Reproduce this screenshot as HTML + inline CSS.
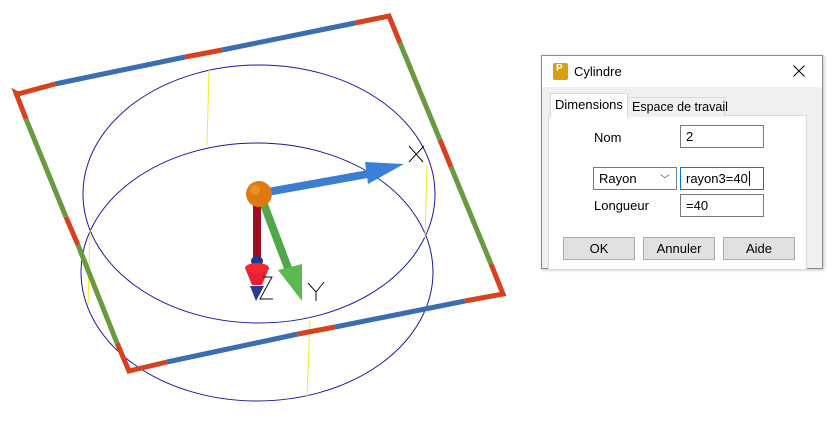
<!DOCTYPE html>
<html><head><meta charset="utf-8"><style>
html,body{margin:0;padding:0;width:829px;height:422px;background:#fff;overflow:hidden;font-family:"Liberation Sans",sans-serif;}
.dlg{position:absolute;left:541px;top:55px;width:280px;height:212px;border:1px solid #8a8a8a;background:#f0f0f0;box-shadow:1px 1px 3px rgba(0,0,0,.25);}
.tb{position:absolute;left:0;top:0;width:280px;height:31px;background:#fff;}
.t{position:absolute;font-size:13px;color:#000;}
.inp{position:absolute;background:#fff;border:1px solid #7a7a7a;height:23px;box-sizing:border-box;font-size:13px;padding:3px 5px;}
.btn{position:absolute;top:181px;width:72px;height:23px;border:1px solid #adadad;background:#e1e1e1;box-sizing:border-box;font-size:13px;text-align:center;line-height:21px;}
</style></head><body>
<svg width="829" height="422" style="position:absolute;left:0;top:0">
<g fill="none" stroke="#1a1aa0" stroke-width="1">
<ellipse cx="259" cy="194" rx="176" ry="129"/>
<ellipse cx="257" cy="272" rx="176" ry="129"/>
</g>
<g stroke="#f0f020" stroke-width="1">
<line x1="209" y1="70" x2="207" y2="145"/><line x1="427" y1="165" x2="425" y2="238"/>
<line x1="310" y1="320" x2="307" y2="398"/><line x1="90" y1="230" x2="88" y2="305"/>
</g>
<g stroke-width="5" stroke-linecap="butt" fill="none">
<polyline stroke="#d8401e" points="18,94 55,84"/>
<line stroke="#3a6eb0" x1="55" y1="84" x2="185" y2="57"/>
<line stroke="#d8401e" x1="185" y1="57" x2="222" y2="50"/>
<line stroke="#3a6eb0" x1="222" y1="50" x2="355" y2="23"/>
<polyline stroke="#d8401e" points="355,23 389,16 400,43"/>
<line stroke="#6a9a40" x1="400" y1="43" x2="440" y2="140"/>
<line stroke="#d8401e" x1="440" y1="140" x2="451" y2="167"/>
<line stroke="#6a9a40" x1="451" y1="167" x2="491" y2="264"/>
<polyline stroke="#d8401e" points="491,264 503,294 465,301"/>
<line stroke="#3a6eb0" x1="465" y1="301" x2="335" y2="327"/>
<line stroke="#d8401e" x1="335" y1="327" x2="298" y2="334"/>
<line stroke="#3a6eb0" x1="298" y1="334" x2="167" y2="362"/>
<polyline stroke="#d8401e" points="167,362 129,371 117,343"/>
<line stroke="#6a9a40" x1="117" y1="343" x2="78" y2="245"/>
<line stroke="#d8401e" x1="78" y1="245" x2="66" y2="217"/>
<line stroke="#6a9a40" x1="66" y1="217" x2="26" y2="119"/>
<polyline stroke="#d8401e" points="26,119 16,93 18,94"/>
</g>
<line x1="262" y1="193" x2="368" y2="174" stroke="#3a7ed0" stroke-width="8"/>
<polygon points="365,162 404,164 368,184" fill="#3a80d8"/>
<line x1="257" y1="200" x2="257" y2="260" stroke="#9a1020" stroke-width="8"/>
<ellipse cx="257" cy="261" rx="6" ry="5" fill="#203a8a"/>
<polygon points="245,268 269,268 262,285 252,285" fill="#e82030"/>
<ellipse cx="257" cy="268" rx="12" ry="5" fill="#f02838"/>
<polygon points="250,286 264,286 256,301" fill="#2a3a90"/>
<line x1="263" y1="202" x2="288" y2="268" stroke="#50a848" stroke-width="8"/>
<polygon points="278,270 302,264 302,301" fill="#5cb850"/>
<circle cx="259" cy="194" r="13" fill="#e07a10"/>
<circle cx="255" cy="190" r="5" fill="#f0a040" opacity=".6"/>
<g stroke="#111" stroke-width="1" fill="none">
<path d="M409 146 L423 162 M424 146 L409 162"/>
<path d="M308 283 L316 292 L324 282 M316 292 L316 301"/>
<path d="M263 277 L272 277 L260 299 L273 299"/>
</g>
</svg>
<div class="dlg">
<div class="tb">
<div style="position:absolute;left:11px;top:7px;width:15px;height:17px;background:#d8a010;border-radius:2px;"></div>
<div style="position:absolute;left:14px;top:7px;font-size:10px;font-weight:bold;color:#fff">P</div>
<div class="t" style="left:32px;top:8px;font-size:13px">Cylindre</div>
<svg style="position:absolute;left:251px;top:9px" width="12" height="12"><path d="M0.5 0.5 L11.5 11.5 M11.5 0.5 L0.5 11.5" stroke="#000" stroke-width="1"/></svg>
</div>
<div style="position:absolute;left:6px;top:59px;width:257px;height:153px;background:#fff;border:1px solid #d9d9d9;border-bottom:none"></div>
<div style="position:absolute;left:8px;top:37px;width:76px;height:24px;background:#fff;border:1px solid #d9d9d9;border-bottom:none"></div>
<div class="t" style="left:13px;top:41px">Dimensions</div>
<div style="position:absolute;left:85px;top:41px;width:96px;height:19px;background:#f0f0f0;border:1px solid #d9d9d9;border-bottom:none"></div>
<div class="t" style="left:90px;top:44px;font-size:12.5px">Espace de travail</div>
<div class="t" style="left:52px;top:74px">Nom</div>
<div class="inp" style="left:138px;top:69px;width:84px">2</div>
<div class="inp" style="left:51px;top:111px;width:84px">Rayon<span style="position:absolute;right:6px;top:3px;font-size:10px;color:#555">﹀</span></div>
<div class="inp" style="left:138px;top:111px;width:84px;border-color:#0078d7">rayon3=40<span style="border-left:1px solid #000;margin-left:1px"></span></div>
<div class="t" style="left:52px;top:142px">Longueur</div>
<div class="inp" style="left:138px;top:138px;width:84px">=40</div>
<div class="btn" style="left:21px">OK</div>
<div class="btn" style="left:101px">Annuler</div>
<div class="btn" style="left:181px">Aide</div>
</div>
</body></html>
